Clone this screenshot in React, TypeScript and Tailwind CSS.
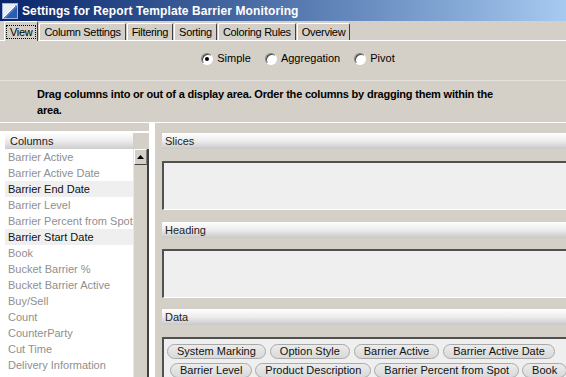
import React from "react";

const columns: { name: string; active?: boolean }[] = [
  { name: "Barrier Active" },
  { name: "Barrier Active Date" },
  { name: "Barrier End Date", active: true },
  { name: "Barrier Level" },
  { name: "Barrier Percent from Spot" },
  { name: "Barrier Start Date", active: true },
  { name: "Book" },
  { name: "Bucket Barrier %" },
  { name: "Bucket Barrier Active" },
  { name: "Buy/Sell" },
  { name: "Count" },
  { name: "CounterParty" },
  { name: "Cut Time" },
  { name: "Delivery Information" },
];

const tabs = ["View", "Column Settings", "Filtering", "Sorting", "Coloring Rules", "Overview"];

function Radio({ label, checked }: { label: string; checked?: boolean }) {
  return (
    <div className="flex items-center gap-[4px]">
      <span className="relative flex h-[12px] w-[12px] items-center justify-center rounded-full border border-t-[#808080] border-l-[#808080] border-b-white border-r-white bg-white shadow-[inset_1px_1px_0_#404040]">
        {checked && <span className="h-[4px] w-[4px] rounded-full bg-black" />}
      </span>
      <span>{label}</span>
    </div>
  );
}

function SectionHeader({ title }: { title: string }) {
  return (
    <div className="flex h-[16px] items-center bg-gradient-to-b from-white via-[#ececec] to-[#c8c8c8] pl-[3px] text-[#222]">
      {title}
    </div>
  );
}

function Chip({ label }: { label: string }) {
  return (
    <span className="flex h-[15px] items-center whitespace-nowrap rounded-full border border-[#a9a9a9] bg-gradient-to-b from-[#ececec] to-[#d9d9d9] px-[9px] text-[#111]">
      {label}
    </span>
  );
}

export default function App() {
  return (
    <div className="flex h-[377px] w-[566px] flex-col overflow-hidden bg-[#d4d0c8] font-['Liberation_Sans',Arial,sans-serif] text-[11px] text-black">
      {/* Title bar */}
      <div className="flex h-[21px] shrink-0 items-center gap-[4px] bg-gradient-to-r from-[#0a246a] to-[#a6caf0] pl-[2px]">
        <svg width="16" height="16" viewBox="0 0 16 16">
          <rect x="0" y="0" width="16" height="16" fill="#e8eef8" />
          <rect x="0.5" y="0.5" width="15" height="15" fill="none" stroke="#9fb4d8" />
          <path d="M1 15 L14 2 L15 3 L15 15 Z" fill="#4f7fcf" />
          <path d="M1 15 L13 3" stroke="#ffffff" strokeWidth="1" />
          <path d="M4 15 L15 4 L15 15 Z" fill="#2a5bb5" />
        </svg>
        <span className="text-[12px] font-bold tracking-[0.1px] text-white">
          Settings for Report Template Barrier Monitoring
        </span>
      </div>

      {/* Tabs */}
      <div className="relative flex h-[20px] shrink-0 items-end border-b border-white pl-[4px] tracking-[-0.3px]">
        {tabs.map((t, i) =>
          i === 0 ? (
            <div
              key={t}
              className="relative z-10 -mb-px flex h-[20px] items-center rounded-t-[2px] border-l border-t border-r border-l-white border-t-white border-r-[#404040] bg-[#d4d0c8] px-[1px]"
            >
              <span className="border border-dotted border-black px-[3px] leading-[12px]">{t}</span>
            </div>
          ) : (
            <div
              key={t}
              className="ml-[1px] flex h-[17px] items-center rounded-t-[2px] border-l border-t border-r border-l-white border-t-white border-r-[#404040] px-[4px]"
            >
              {t}
            </div>
          )
        )}
      </div>

      {/* Radio row */}
      <div className="flex h-[39px] shrink-0 items-center justify-center gap-[14px] pl-[30px] pb-[4px]">
        <Radio label="Simple" checked />
        <Radio label="Aggregation" />
        <Radio label="Pivot" />
      </div>

      {/* Instruction */}
      <div className="flex h-[43px] shrink-0 flex-col justify-center border-t border-b border-t-[#e6e3de] border-b-white pl-[37px] pr-[30px] text-[11px] font-bold leading-[16px] tracking-[-0.2px]">
        <p className="w-[480px]">
          Drag columns into or out of a display area. Order the columns by dragging them within the area.
        </p>
      </div>

      {/* Main */}
      <div className="flex min-h-0 flex-1">
        {/* Left pane */}
        <div className="flex w-[149px] shrink-0 flex-col pt-[8px]">
          <div className="flex flex-1 flex-col bg-white">
            <div className="flex pt-[2px]">
              <div className="ml-[5px] flex h-[16px] w-[128px] items-center bg-gradient-to-b from-white via-[#ececec] to-[#cdcdcd] pl-[5px] text-[#222]">
                Columns
              </div>
              <div className="w-[16px] bg-[#d4d0c8]" />
            </div>
            <div className="flex flex-1">
              <div className="w-[133px] pl-[5px]">
                {columns.map((c) => (
                  <div
                    key={c.name}
                    className={
                      c.active
                        ? "flex h-[16px] items-center bg-[#efefef] pl-[3px] text-[#111]"
                        : "flex h-[16px] items-center pl-[3px] text-[#8f8f8f]"
                    }
                  >
                    {c.name}
                  </div>
                ))}
              </div>
              <div className="flex w-[16px] flex-col border-l border-r-2 border-l-[#e8e6e2] border-r-[#404040] bg-[#d4d0c8]">
                <div className="flex h-[16px] items-center justify-center border border-t-white border-l-white border-b-[#404040] border-r-[#808080]">
                  <svg width="7" height="4" viewBox="0 0 7 4">
                    <path d="M3.5 0 L7 4 L0 4 Z" fill="#000" />
                  </svg>
                </div>
              </div>
            </div>
          </div>
        </div>

        {/* Splitter */}
        <div className="w-[6px] shrink-0 bg-white" />

        {/* Right pane */}
        <div className="flex min-w-0 flex-1 flex-col pl-[7px] pt-[10px]">
          <SectionHeader title="Slices" />
          <div className="mt-[12px] h-[49px] shrink-0 border-t-2 border-l-2 border-b border-t-[#505050] border-l-[#505050] border-b-white bg-[#efefef]" />
          <div className="mt-[12px]">
            <SectionHeader title="Heading" />
          </div>
          <div className="mt-[11px] h-[49px] shrink-0 border-t-2 border-l-2 border-b border-t-[#505050] border-l-[#505050] border-b-white bg-[#efefef]" />
          <div className="mt-[11px]">
            <SectionHeader title="Data" />
          </div>
          <div className="mt-[12px] flex flex-1 flex-col gap-[4px] border-t-2 border-l-2 border-t-[#505050] border-l-[#505050] bg-[#efefef] pl-[3px] pt-[5px]">
            <div className="flex gap-[4px]">
              <Chip label="System Marking" />
              <Chip label="Option Style" />
              <Chip label="Barrier Active" />
              <Chip label="Barrier Active Date" />
            </div>
            <div className="flex gap-[3px] pl-[3px]">
              <Chip label="Barrier Level" />
              <Chip label="Product Description" />
              <Chip label="Barrier Percent from Spot" />
              <Chip label="Book" />
            </div>
          </div>
        </div>
      </div>
    </div>
  );
}
